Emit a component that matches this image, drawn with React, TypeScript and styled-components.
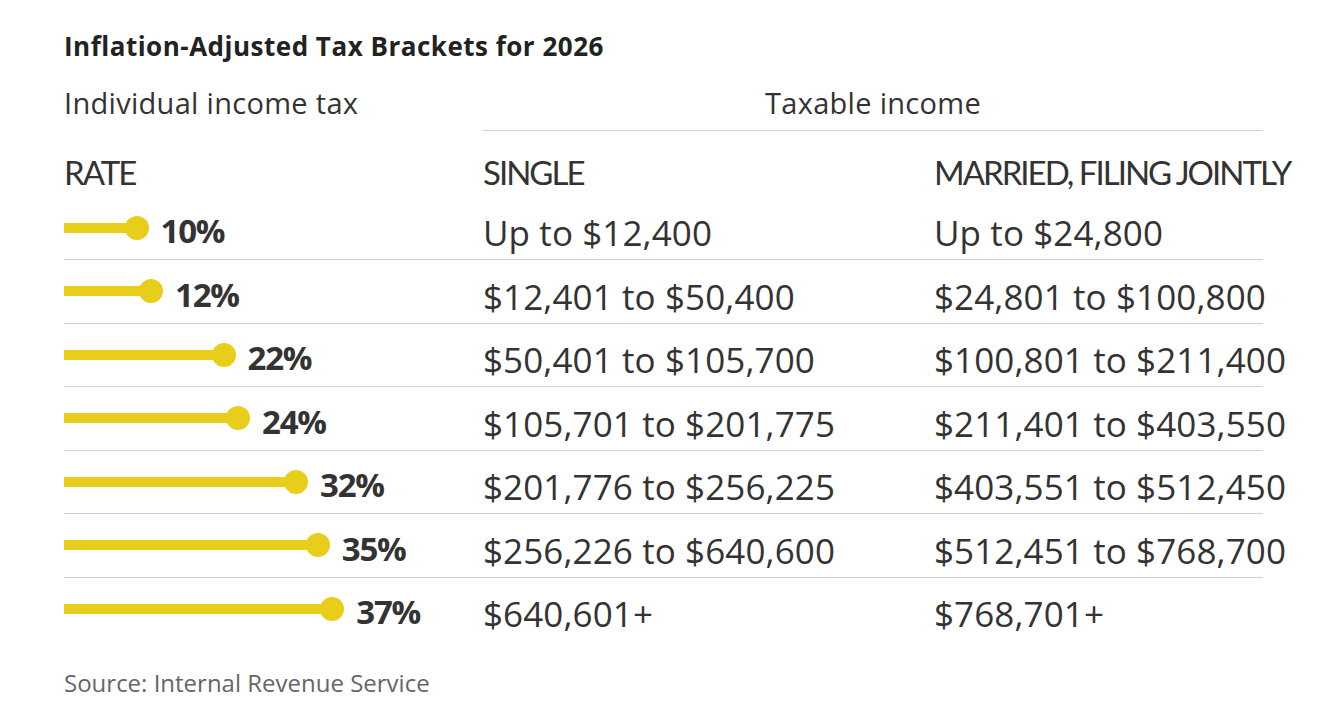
import React from "react";
import styled, { createGlobalStyle } from "styled-components";

interface IBracket {
	rate: number;
	single: string;
	joint: string;
}

const brackets: IBracket[] = [
	{ rate: 10, single: "Up to $12,400", joint: "Up to $24,800" },
	{ rate: 12, single: "$12,401 to $50,400", joint: "$24,801 to $100,800" },
	{ rate: 22, single: "$50,401 to $105,700", joint: "$100,801 to $211,400" },
	{ rate: 24, single: "$105,701 to $201,775", joint: "$211,401 to $403,550" },
	{ rate: 32, single: "$201,776 to $256,225", joint: "$403,551 to $512,450" },
	{ rate: 35, single: "$256,226 to $640,600", joint: "$512,451 to $768,700" },
	{ rate: 37, single: "$640,601+", joint: "$768,701+" },
];

// px per percentage point
const SCALE = 7.25;

const GlobalStyle = createGlobalStyle`
	html, body {
		margin: 0;
		padding: 0;
		background: #fff;
	}
	body {
		font-family: "Open Sans", "Liberation Sans", sans-serif;
		color: #333;
	}
`;

const App: React.FC = () => {
	return (
		<>
			<GlobalStyle />
			<Chart>
				<Title>Inflation-Adjusted Tax Brackets for 2026</Title>
				<TopHead>
					<SubHead>Individual income tax</SubHead>
					<GroupHead>Taxable income</GroupHead>
				</TopHead>
				<ColHead>
					<span>RATE</span>
					<span>SINGLE</span>
					<span>MARRIED, FILING JOINTLY</span>
				</ColHead>
				{brackets.map((b, idx) => (
					<Row key={b.rate} $last={idx === brackets.length - 1}>
						<RateCell>
							<Bar style={{ width: `${b.rate * SCALE}px` }} />
							<RateLabel>{b.rate}%</RateLabel>
						</RateCell>
						<Cell>{b.single}</Cell>
						<Cell>{b.joint}</Cell>
					</Row>
				))}
				<Source>Source: Internal Revenue Service</Source>
			</Chart>
		</>
	);
};

const Chart = styled.div`
	width: 1199px;
	padding: 30px 0 0 64px;
`;

const Title = styled.h1`
	margin: 0;
	font-size: 26px;
	line-height: 32px;
	font-weight: 700;
	letter-spacing: 0.5px;
	color: #222;
`;

const TopHead = styled.div`
	display: grid;
	grid-template-columns: 419px 780px;
	margin-top: 23px;
	font-size: 29px;
	line-height: 36px;
	font-weight: 400;
	color: #333;
`;

const SubHead = styled.div`
	letter-spacing: 0.3px;
`;

const GroupHead = styled.div`
	text-align: center;
	letter-spacing: 0.3px;
	padding-bottom: 9px;
	border-bottom: 1px solid #d2d2d2;
`;

const ColHead = styled.div`
	display: grid;
	grid-template-columns: 419px 451px 329px;
	box-sizing: border-box;
	height: 65.5px;
	padding: 21px 0 0;
	font-family: Lato, "Open Sans", sans-serif;
	font-size: 33px;
	line-height: 40px;
	font-weight: 400;
	letter-spacing: -2px;
	white-space: nowrap;
`;

const Row = styled.div<{ $last: boolean }>`
	display: grid;
	grid-template-columns: 419px 451px 329px;
	box-sizing: border-box;
	height: 63.5px;
	border-bottom: 1px solid ${(props) => (props.$last ? "transparent" : "#d2d2d2")};
`;

const RateCell = styled.div`
	display: flex;
	align-items: center;
`;

const Bar = styled.div`
	position: relative;
	height: 10px;
	background: #e9cd1b;

	&:after {
		content: "";
		position: absolute;
		right: -12px;
		top: 50%;
		width: 24px;
		height: 24px;
		border-radius: 50%;
		background: #e9cd1b;
		transform: translateY(-50%);
	}
`;

const RateLabel = styled.span`
	margin-left: 24px;
	padding-top: 7px;
	font-size: 33px;
	line-height: 40px;
	font-weight: 700;
	letter-spacing: -1.2px;
	color: #333;
`;

const Cell = styled.div`
	align-self: end;
	padding-bottom: 6px;
	font-size: 35px;
	line-height: 40px;
	font-weight: 400;
	letter-spacing: 0.1px;
	white-space: nowrap;
`;

const Source = styled.div`
	margin-top: 27px;
	font-size: 24px;
	line-height: 30px;
	color: #666;
`;

export default App;
